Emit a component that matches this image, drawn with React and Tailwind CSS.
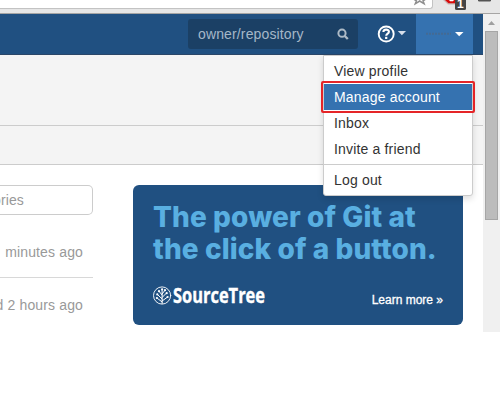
import React from 'react';

function BrowserBar() {
  return (
    <div className="relative h-[14px] shrink-0 border-b border-[#a6a5a4] bg-[#e6e6e6]">
      <div className="h-[9px] w-[433px] rounded-br-[3px] border-r border-b border-[#c3c3c3] bg-white" />
      <svg className="absolute top-0 left-0" width="500" height="13" viewBox="0 0 500 13">
        <path d="M415.3 -2.5 L413.5 -1 L416.4 0.8 L415.3 3.8 L419.7 1 L424.1 3.8 L423 0.8 L426 -1" fill="none" stroke="#8e8e8e" strokeWidth="1.5" />
        <path d="M443 0 L448 4.5 H458 V0 Z" fill="#c9b5b5" />
        <path d="M445 0 L448.5 3.3 H458 V0 Z" fill="#d80b0b" />
        <path d="M449 0 H454 L453 1.3 H450 Z" fill="#fff" />
        <rect x="455" y="-3" width="11" height="13" rx="1.5" fill="#454545" />
        <path d="M478.5 0 V1 H490.5 V0" fill="#555" stroke="#555" />
      </svg>
      <span className="absolute top-0 left-[457px] text-[12px] leading-[9px] font-bold text-white">1</span>
    </div>
  );
}

function Header() {
  return (
    <header className="flex h-[41px] border-b border-[#2a4668] bg-[#205081] pl-[188px]">
      <div className="mt-[5px] flex h-[30px] w-[170px] items-center justify-between rounded-[3px] bg-[#1b4065] pr-[9px] pl-[10px] text-[14px] tracking-[0.14px] text-[#a5b7c8]">
        <span>owner/repository</span>
        <svg width="12" height="12" viewBox="0 0 12 12" fill="none" stroke="#adbac6">
          <circle cx="5" cy="5.2" r="3.6" strokeWidth="2" />
          <path d="M7.8 8 L10.8 11" strokeWidth="2.4" />
        </svg>
      </div>
      <div className="flex w-[58px] pt-[11px] pl-[19px]">
        <svg width="32" height="18" viewBox="0 0 32 18">
          <circle cx="9.2" cy="9" r="7.5" fill="none" stroke="#fff" strokeWidth="1.9" />
          <path d="M6.4 7.1 C6.4 3.9 11.9 3.9 11.9 6.8 C11.9 8.7 9.2 8.5 9.2 10.8" fill="none" stroke="#fff" strokeWidth="2.1" />
          <rect x="8.1" y="11.8" width="2.2" height="2.2" fill="#fff" />
          <path d="M20.8 6 H29 L24.9 10.2 Z" fill="#d5deea" />
        </svg>
      </div>
      <div className="flex w-[57px] bg-[#3572b0] pt-[15px] pl-[10px]">
        <svg width="40" height="9" viewBox="0 0 40 9">
          <path d="M0 4.7 H25" stroke="#47698f" strokeWidth="2" strokeDasharray="2 1" opacity="0.85" />
          <path d="M29 3 H37.5 L33.2 7.2 Z" fill="#fff" />
        </svg>
      </div>
    </header>
  );
}

function AccountMenu() {
  return (
    <nav className="absolute top-[41px] left-[323px] h-[141px] w-[150px] rounded-b-[3px] border border-[#ccc] bg-white pt-[2px] text-[14px] leading-[26px] tracking-[0.17px] text-[#333] shadow-[0_3px_6px_rgba(0,0,0,0.13)]">
      <div className="h-[26px] pl-[10px]">View profile</div>
      <div className="relative h-[26px] bg-[#3572b0] pl-[10px] text-white">
        Manage account
        <span className="absolute -inset-x-[3px] -inset-y-[3px] rounded-[2px] border-2 border-[#e52528]" />
      </div>
      <div className="h-[26px] pl-[10px]">Inbox</div>
      <div className="h-[26px] pl-[10px]">Invite a friend</div>
      <div className="mt-[2px] border-t border-[#ccc] pt-[2px] pl-[10px]">Log out</div>
    </nav>
  );
}

function SourceTreeLogo() {
  return (
    <svg width="114" height="24" viewBox="0 0 114 24">
      <g fill="none" stroke="#fff" strokeLinecap="round">
        <circle cx="9.1" cy="10.5" r="8.6" strokeWidth="0.9" />
        <path d="M9.1 18.5 V5 M9.1 17 L4.6 13.5 M9.1 14 L5 10 M9.1 16 L13.8 12.6 M9.1 12.5 L13 8.5 M9.1 10 L6.6 7 M9.1 9 L11.4 6" strokeWidth="1" />
      </g>
      <g fill="#fff">
        <circle cx="9.1" cy="4.4" r="1.1" />
        <circle cx="6" cy="6.2" r="1.1" />
        <circle cx="12" cy="5.2" r="1.1" />
        <circle cx="13.7" cy="8.2" r="1.1" />
        <circle cx="4.3" cy="9.4" r="1.1" />
        <circle cx="14.6" cy="12" r="1.1" />
        <circle cx="3.9" cy="13" r="1.1" />
      </g>
      <text x="20" y="17.7" fill="#fff" stroke="#fff" strokeWidth="0.4" fontFamily="Open Sans, sans-serif" fontWeight="700" fontSize="20.5" textLength="92" lengthAdjust="spacingAndGlyphs">SourceTree</text>
    </svg>
  );
}

function Banner() {
  return (
    <section className="mt-[20px] ml-[40px] h-[140px] w-[330px] rounded-[6px] bg-[#205081] pt-[16px] pl-[20px]">
      <h2 className="font-[Inter,sans-serif] text-[28px] leading-[32px] font-extrabold tracking-[0.1px] whitespace-nowrap text-[#59afe1]">
        <div>The power of Git at</div>
        <div>the click of a button.</div>
      </h2>
      <div className="mt-[20px] flex items-start justify-between pr-[20px]">
        <SourceTreeLogo />
        <span className="mt-[8px] text-[12px] leading-[15px] whitespace-nowrap text-white [-webkit-text-stroke:0.3px_white]">Learn more »</span>
      </div>
    </section>
  );
}

function Feed() {
  return (
    <aside className="w-[93px] pt-[20px] text-[14px] tracking-[0.14px] whitespace-nowrap text-[#999]">
      <div className="flex h-[30px] items-center justify-end rounded-r-[5px] border-y border-r border-[#ccc] pr-[68px]">
        <span>ories</span>
      </div>
      <div className="flex h-[63px] items-end justify-end border-b border-[#d8d8d8] pr-[10px] pb-[15px] leading-[20px]">minutes ago</div>
      <div className="flex justify-end pt-[17px] pr-[10px] leading-[20px]">d 2 hours ago</div>
    </aside>
  );
}

function Scrollbar() {
  return (
    <div className="flex h-[318px] w-[17px] flex-col items-center bg-[#f0f0f0]">
      <svg width="17" height="17" viewBox="0 0 17 17">
        <path d="M5 11 L8.5 7 L12 11 Z" fill="#a0a0a0" />
      </svg>
      <div className="h-[189px] w-[13px] border border-[#a6a6a6] bg-[#bcbcbc]" />
    </div>
  );
}

export default function App() {
  return (
    <div className="flex h-[402px] w-[500px] flex-col overflow-hidden bg-white font-['Liberation_Sans',Arial,sans-serif]">
      <BrowserBar />
      <div className="flex">
        <main className="relative h-[318px] w-[483px]">
          <Header />
          <div className="h-[71px] border-b border-[#ccc] bg-[#f4f4f4]" />
          <div className="h-[39px] border-b border-[#ccc] bg-[#f4f4f4]" />
          <div className="flex">
            <Feed />
            <Banner />
          </div>
          <AccountMenu />
        </main>
        <Scrollbar />
      </div>
    </div>
  );
}
